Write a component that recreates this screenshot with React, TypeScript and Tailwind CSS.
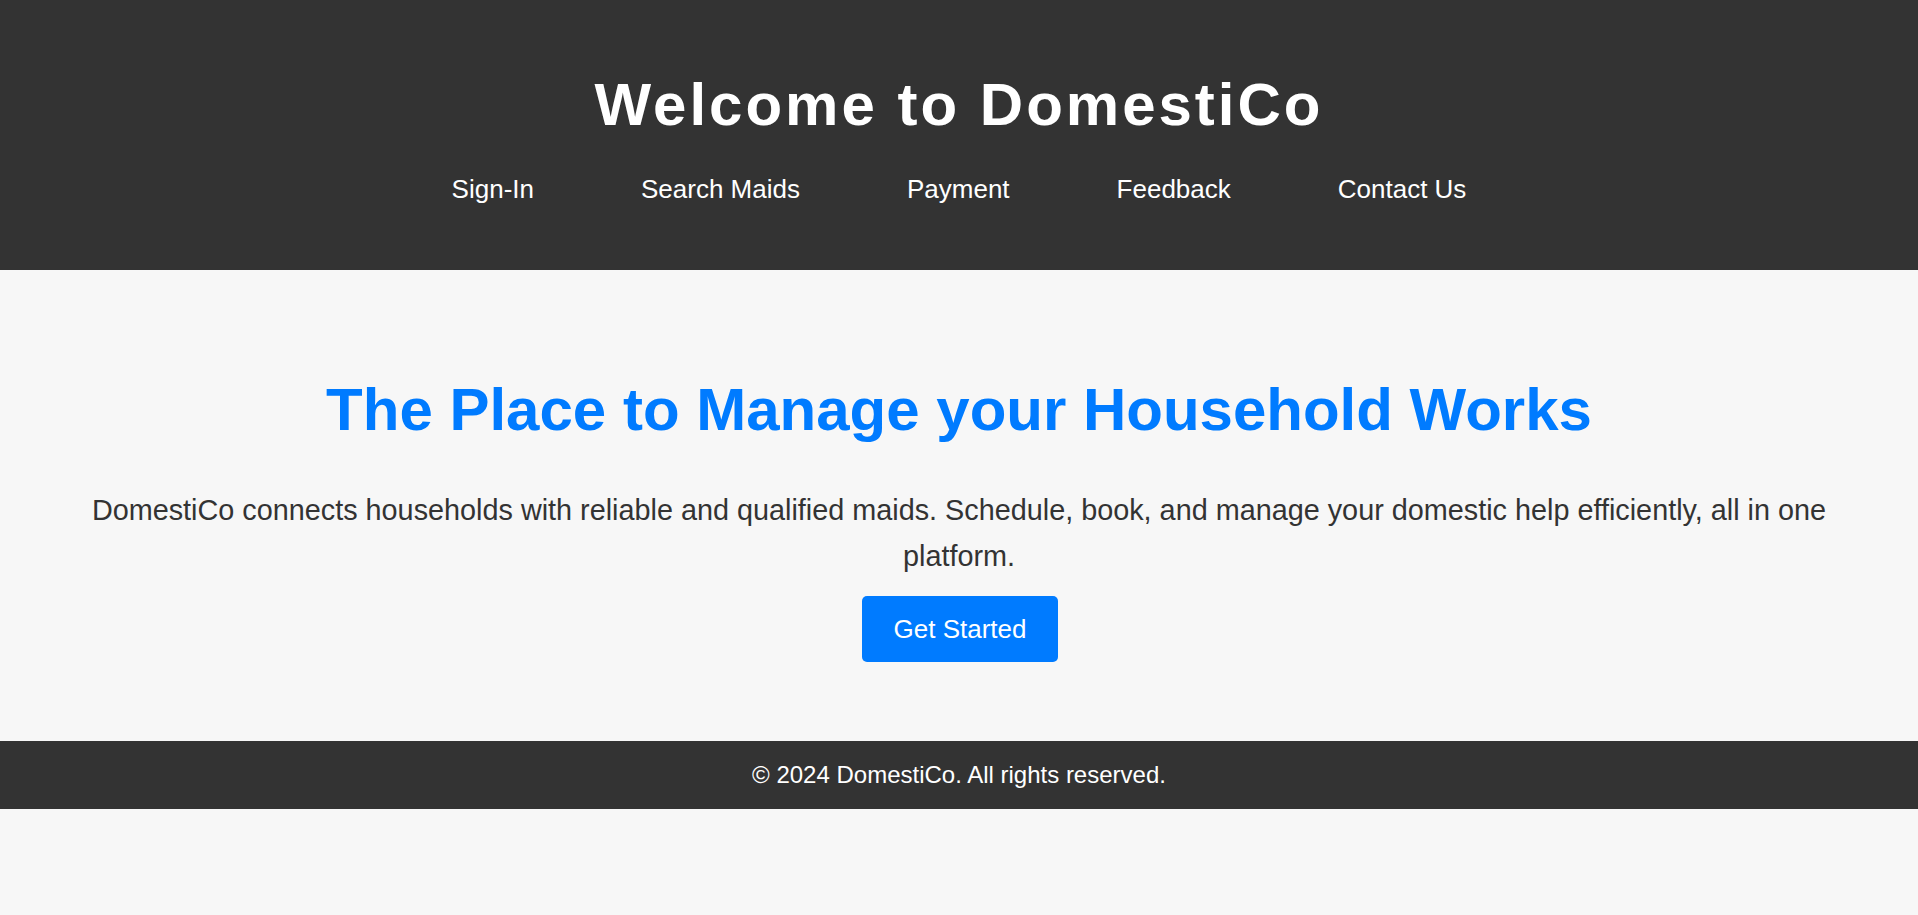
import React from 'react';

const links = ['Sign-In', 'Search Maids', 'Payment', 'Feedback', 'Contact Us'];

export default function App() {
  return (
    <div className="min-h-screen bg-[#f7f7f7] font-['Liberation_Sans',Arial,sans-serif]">
      <header className="bg-[#333333] text-white text-center pt-[70px] pb-[66px]">
        <h1 className="text-[60px] font-bold leading-[69px] tracking-[3px]">Welcome to DomestiCo</h1>
        <nav className="mt-[35px] flex justify-center gap-[107px] text-[26px] leading-[30px]">
          {links.map((link) => (
            <a key={link} href="#" className="text-white">
              {link}
            </a>
          ))}
        </nav>
      </header>

      <main className="text-center pt-[105px] pb-[79px] px-10">
        <h2 className="text-[60px] font-bold leading-[69px] text-[#007bff]">
          The Place to Manage your Household Works
        </h2>
        <p className="mt-[43px] text-[28.8px] leading-[1.6] text-[#333333]">
          DomestiCo connects households with reliable and qualified maids. Schedule, book, and manage your domestic
          help efficiently, all in one platform.
        </p>
        <button className="mt-[17px] h-[66px] w-[196px] rounded-[5px] bg-[#007bff] text-white text-[26px] translate-x-[1px]">
          Get Started
        </button>
      </main>

      <footer className="bg-[#333333] text-white text-center text-[24px] h-[68px] flex items-center justify-center">
        © 2024 DomestiCo. All rights reserved.
      </footer>
    </div>
  );
}
